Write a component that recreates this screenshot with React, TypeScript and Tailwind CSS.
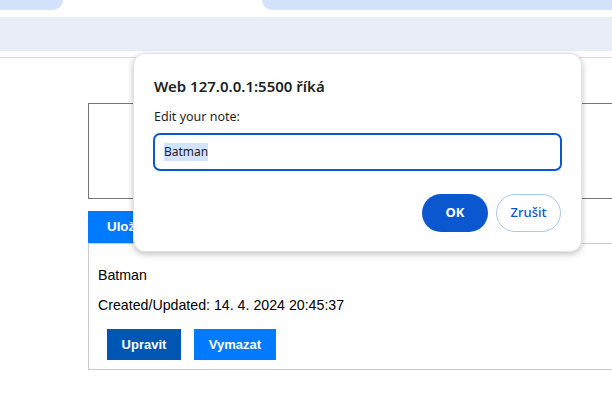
export default function App() {
  return (
    <div className="relative w-[612px] h-[420px] overflow-hidden bg-white" style={{ fontFamily: '"Liberation Sans", Arial, sans-serif' }}>
      <div className="flex justify-between h-[10px]">
        <div className="w-[63px] bg-[#d3e3fd] rounded-br-[10px]" />
        <div className="w-[350px] bg-[#d3e3fd] rounded-bl-[10px]" />
      </div>
      <div className="mt-[7px] h-[34px] bg-[#e9edf7]" />
      <div className="mt-[6px] border-t border-[#dddddd]" />
      <div className="pl-[88px] pt-[45px]">
        <div className="w-[600px] h-[96px] border border-[#767676]" />
        <div className="mt-[12px] flex">
          <div className="h-[32px] bg-[#007bff] text-white text-[13.33px] font-semibold flex items-center px-[19px]">Uložit poznámku</div>
        </div>
        <div className="w-[600px] h-[127px] border border-[#cccccc] px-[9px] pt-[22px]">
          <div className="text-[14.2px] leading-[18px] text-black">Batman</div>
          <div className="mt-[12px] text-[14.2px] leading-[18px] text-black">Created/Updated: 14. 4. 2024 20:45:37</div>
          <div className="mt-[15px] ml-[9px] flex gap-[13px]">
            <div className="w-[74px] h-[31px] bg-[#0056b3] text-white text-[13px] font-semibold flex items-center justify-center">Upravit</div>
            <div className="w-[82px] h-[31px] bg-[#007bff] text-white text-[13px] font-semibold flex items-center justify-center">Vymazat</div>
          </div>
        </div>
      </div>
      <div
        className="absolute left-[133px] top-[53px] w-[449px] h-[199px] bg-white rounded-[12px] border border-[#e3e3e3] shadow-[0_2px_6px_rgba(0,0,0,0.25)] pl-[19px] pr-[19px] pt-[22px]"
        style={{ fontFamily: '"Noto Sans", "Open Sans", sans-serif' }}
      >
        <div className="pl-[1px] text-[15px] leading-[20px] font-semibold text-[#1f1f1f]">Web 127.0.0.1:5500 říká</div>
        <div className="pl-[1px] mt-[12px] text-[12.5px] leading-[18px] text-[#1f1f1f]">Edit your note:</div>
        <div className="mt-[7px] h-[38px] border-2 border-[#0b57d0] rounded-[7px] flex items-center px-[9px]">
          <span className="bg-[#d3e3fd] text-[12px] leading-[18px] text-[#1f1f1f]">Batman</span>
        </div>
        <div className="mt-[23px] pr-[1px] flex justify-end gap-[8px]">
          <div className="w-[66px] h-[38px] rounded-full bg-[#0b57d0] text-white text-[13px] font-bold flex items-center justify-center">OK</div>
          <div className="w-[65px] h-[38px] rounded-full border border-[#a8c7fa] text-[#0b57d0] text-[13px] font-medium flex items-center justify-center">Zrušit</div>
        </div>
      </div>
    </div>
  );
}
